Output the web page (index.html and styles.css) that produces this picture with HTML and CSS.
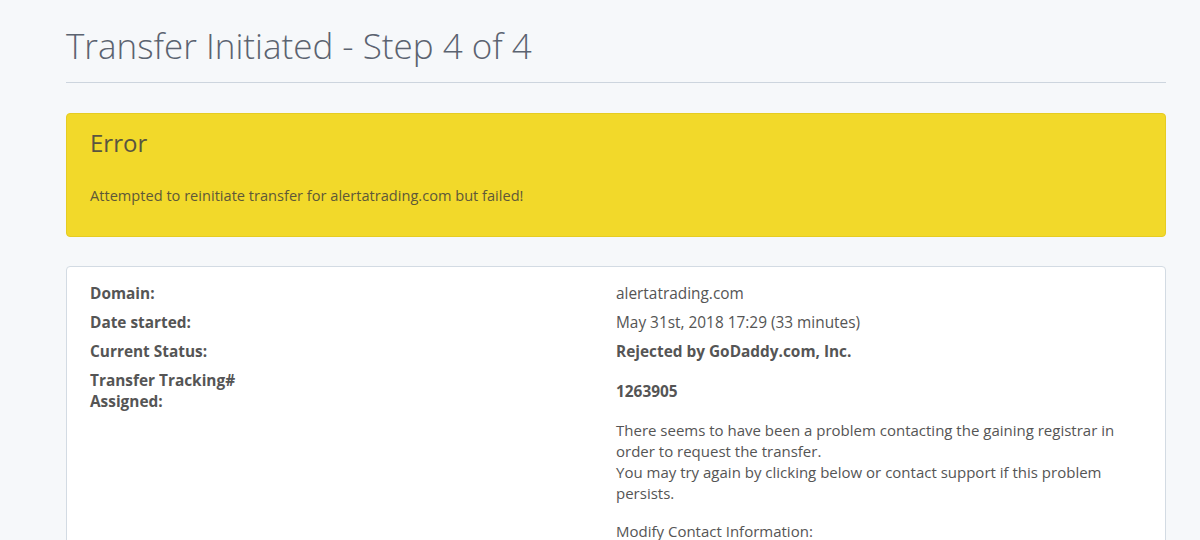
FILE: index.html
```html
<!DOCTYPE html>
<html>
<head>
<meta charset="utf-8">
<link rel="stylesheet" href="styles.css">
</head>
<body>
<div class="page">
  <h1 class="title">Transfer Initiated - Step 4 of 4</h1>
  <div class="rule"></div>
  <div class="alert">
    <h2 class="alert-title">Error</h2>
    <p class="alert-text">Attempted to reinitiate transfer for alertatrading.com but failed!</p>
  </div>
  <div class="panel">
    <div class="row">
      <div class="label">Domain:</div>
      <div class="value">alertatrading.com</div>
    </div>
    <div class="row">
      <div class="label">Date started:</div>
      <div class="value">May 31st, 2018 17:29 (33 minutes)</div>
    </div>
    <div class="row">
      <div class="label">Current Status:</div>
      <div class="value strong">Rejected by GoDaddy.com, Inc.</div>
    </div>
    <div class="row row-tall">
      <div class="label">Transfer Tracking#<br>Assigned:</div>
      <div class="value strong center">1263905</div>
    </div>
    <div class="row">
      <div class="label"></div>
      <div class="value">
        <p class="msg">There seems to have been a problem contacting the gaining registrar in order to request the transfer.<br>You may try again by clicking below or contact support if this problem persists.</p>
        <p class="msg">Modify Contact Information:</p>
      </div>
    </div>
  </div>
</div>
</body>
</html>
```

FILE: styles.css
```css
html, body {
  margin: 0;
  padding: 0;
  background: #f6f8fa;
}
body {
  font-family: "Open Sans", "Liberation Sans", sans-serif;
  color: #555;
}
.page {
  width: 1100px;
  margin-left: 66px;
}
.title {
  margin: 0;
  padding-top: 23px;
  font-weight: 300;
  font-size: 35px;
  line-height: 46px;
  color: #5b6370;
}
.rule {
  margin-top: 13px;
  height: 1px;
  background: #cdd5de;
}
.alert {
  margin-top: 30px;
  background: #f2d92a;
  border: 1px solid #e6cc22;
  border-radius: 4px;
  padding: 14px 23px 28px;
  height: 80px;
}
.alert-title {
  margin: 0;
  font-weight: 400;
  font-size: 24px;
  line-height: 30px;
  color: #5a5540;
}
.alert-text {
  margin: 27px 0 0;
  font-size: 14.6px;
  line-height: 20px;
  color: #5e5838;
}
.panel {
  margin-top: 29px;
  background: #fff;
  border: 1px solid #d3dbe3;
  border-radius: 4px;
  padding: 16px 23px 0;
  height: 300px;
}
.row {
  display: grid;
  grid-template-columns: 526px 1fr;
  font-size: 15.4px;
  line-height: 21px;
  margin-bottom: 8px;
}
.label {
  font-weight: 700;
  color: #555;
}
.value {
  color: #555;
}
.strong {
  font-weight: 700;
}
.center {
  align-self: center;
}
.row-tall {
  margin-bottom: 8px;
}
.msg {
  margin: 0 0 17px;
  font-size: 15px;
  line-height: 21px;
}
```
